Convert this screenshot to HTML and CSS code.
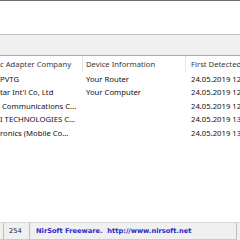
FILE: index.html
```html
<!DOCTYPE html>
<html lang="en">
<head>
    <meta charset="UTF-8">
    <title>Wireless Network Watcher</title>
    <link rel="stylesheet" href="styles.css">
</head>
<body>
    <div class="window">
        <div class="upper"></div>
        <div class="band"></div>

        <div class="list">
            <div class="list-row list-head">
                <span class="col col-company">c Adapter Company</span>
                <span class="col col-device">Device Information</span>
                <span class="col col-first">First Detected</span>
            </div>
            <div class="list-row">
                <span class="col col-company">PVTG</span>
                <span class="col col-device">Your Router</span>
                <span class="col col-first">24.05.2019 12:41:07</span>
            </div>
            <div class="list-row">
                <span class="col col-company">tar Int'l Co, Ltd</span>
                <span class="col col-device">Your Computer</span>
                <span class="col col-first">24.05.2019 12:41:07</span>
            </div>
            <div class="list-row">
                <span class="col col-company">&nbsp;Communications C...</span>
                <span class="col col-device"></span>
                <span class="col col-first">24.05.2019 12:43:22</span>
            </div>
            <div class="list-row">
                <span class="col col-company">I TECHNOLOGIES C...</span>
                <span class="col col-device"></span>
                <span class="col col-first">24.05.2019 13:02:15</span>
            </div>
            <div class="list-row">
                <span class="col col-company">ronics (Mobile Co...</span>
                <span class="col col-device"></span>
                <span class="col col-first">24.05.2019 13:10:48</span>
            </div>
        </div>

        <div class="statusbar">
            <span class="sb-panel sb-first"></span>
            <span class="sb-panel sb-count">254</span>
            <span class="sb-panel sb-link">NirSoft Freeware.&nbsp; http://www.nirsoft.net</span>
        </div>
    </div>
</body>
</html>
```

FILE: styles.css
```css
body {
    margin: 0;
    width: 240px;
    height: 240px;
    overflow: hidden;
    background: #ffffff;
    font-family: 'Noto Sans', 'Open Sans', sans-serif;
}

.window {
    display: flex;
    flex-direction: column;
    height: 240px;
    border-top: 1px solid #6e6e6e;
    box-sizing: border-box;
}

.upper {
    height: 33px;
    background: #ffffff;
}

.band {
    height: 20px;
    background: #f0f0f0;
    border-top: 1px solid #c4c4c4;
    border-bottom: 1px solid #acacac;
}

.list {
    flex: 1;
    background: #ffffff;
    overflow: hidden;
}

.list-row {
    display: flex;
    height: 13.5px;
    align-items: center;
    font-size: 7.7px;
    color: #111111;
    white-space: nowrap;
}

.list-head {
    height: 16px;
    color: #3a3a3a;
}

.col {
    overflow: hidden;
    box-sizing: border-box;
}

.col-company {
    width: 83px;
    padding-left: 0;
}
.col-device {
    width: 103px;
    padding-left: 3px;
}
.col-first {
    flex: 1;
    padding-left: 5px;
}

.list-head .col {
    height: 16px;
    line-height: 16px;
    border-right: 1px solid #e5e5e5;
}
.list-head .col-first {
    border-right: none;
}

.statusbar {
    display: flex;
    height: 17px;
    background: #f0f0f0;
    border-top: 1px solid #d7d7d7;
    align-items: stretch;
    font-size: 7px;
}

.sb-panel {
    display: flex;
    align-items: center;
    border-right: 1px solid #bdbdbd;
    border-bottom: 1px solid #c9c9c9;
    box-sizing: border-box;
}

.sb-first {
    width: 4px;
}
.sb-count {
    width: 26px;
    padding-left: 5px;
    color: #222222;
    font-family: 'DejaVu Sans', sans-serif;
    font-size: 6.7px;
}
.sb-link {
    width: 207px;
    padding-left: 6px;
    color: #2b2bc8;
    font-family: 'DejaVu Sans', sans-serif;
    font-weight: bold;
    font-size: 6.7px;
}
```
